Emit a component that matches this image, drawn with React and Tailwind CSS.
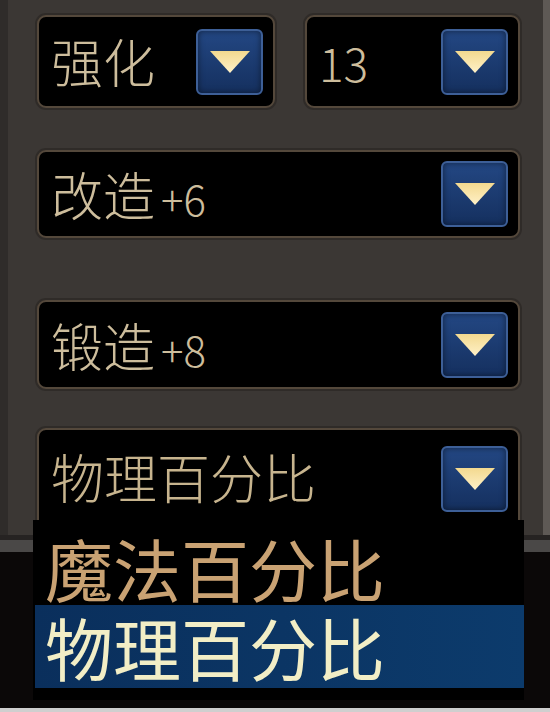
import React from "react";

const FONT = { fontFamily: '"Noto Sans CJK SC", "Noto Sans", sans-serif' };

function Arrow() {
  return (
    <div className="w-[67px] h-[66px] shrink-0 rounded-[6px] border-2 border-[#3d5f97] bg-gradient-to-b from-[#234783] to-[#15305f] flex items-center justify-center shadow-[inset_0_0_6px_rgba(0,0,0,0.5)]">
      <svg width="42" height="24" viewBox="0 0 42 24">
        <defs>
          <linearGradient id="tri" x1="0" y1="0" x2="0" y2="1">
            <stop offset="0" stopColor="#f3d98f" />
            <stop offset="1" stopColor="#fff1c8" />
          </linearGradient>
        </defs>
        <polygon points="1,1 41,1 21,23" fill="url(#tri)" />
      </svg>
    </div>
  );
}

function Box({ className = "", children }) {
  return (
    <div
      className={`bg-black rounded-[9px] border-2 border-[#54483b] shadow-[0_0_0_2px_#2f2b28] flex items-center justify-between pl-[12px] pr-[10px] ${className}`}
    >
      {children}
    </div>
  );
}

export default function App() {
  return (
    <div
      className="w-[550px] h-[712px] overflow-hidden relative flex flex-col bg-[#0b0808] font-light"
      style={FONT}
    >
      <div className="h-[535px] shrink-0 bg-[#3b3734] border-l-[8px] border-l-[#2f2c2a] border-r-[7px] border-r-[#5e5955] pl-[29px] pr-[23px] pt-[15px] flex flex-col">
        <div className="flex gap-[30px]">
          <Box className="w-[238px] h-[93px]">
            <span className="text-[52px] leading-none text-[#cdbd9c] -mt-[2px]">强化</span>
            <Arrow />
          </Box>
          <Box className="w-[215px] h-[93px]">
            <span className="text-[46px] leading-none text-[#cdbd9c]">13</span>
            <Arrow />
          </Box>
        </div>
        <Box className="mt-[42px] h-[91px]">
          <span className="text-[52px] leading-none text-[#cdbd9c] flex items-baseline">
            改造<span className="text-[42px] ml-[6px]">+6</span>
          </span>
          <Arrow />
        </Box>
        <Box className="mt-[62px] h-[91px]">
          <span className="text-[52px] leading-none text-[#cdbd9c] flex items-baseline">
            锻造<span className="text-[42px] ml-[6px]">+8</span>
          </span>
          <Arrow />
        </Box>
        <Box className="mt-[39px] h-[110px] items-start pt-[16px]">
          <span className="text-[53px] leading-none text-[#c7b48e] mt-[4px]">物理百分比</span>
          <Arrow />
        </Box>
      </div>
      <div className="h-[5px] shrink-0 bg-[#262322]" />
      <div className="h-[12px] shrink-0 bg-[#4a4847]" />
      <div className="flex-1 bg-[#0b0808]" />
      <div className="h-[4px] shrink-0 bg-[#cfcfcf]" />

      <div className="absolute left-[33px] top-[520px] w-[491px] h-[180px] bg-black flex flex-col pt-[10px] pb-[12px] pl-[2px]">
        <div className="h-[75px] flex items-center pl-[10px]">
          <div className="text-[68px] leading-none font-normal text-[#c9a273]">魔法百分比</div>
        </div>
        <div className="h-[83px] flex items-center pl-[10px] bg-gradient-to-r from-[#0a2f5c] to-[#0c3b6c]">
          <div className="text-[68px] leading-none font-normal text-[#f2eec6]">物理百分比</div>
        </div>
      </div>
    </div>
  );
}
